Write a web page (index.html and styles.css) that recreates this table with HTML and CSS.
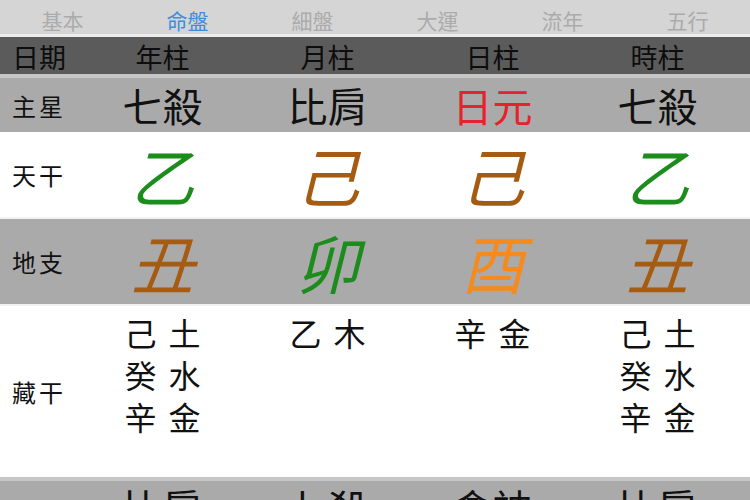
FILE: index.html
```html
<!DOCTYPE html>
<html lang="zh-Hant">
<head>
<meta charset="utf-8">
<link rel="stylesheet" href="styles.css">
</head>
<body>
<div class="page">
  <nav class="tabs">
    <span class="tab">基本</span>
    <span class="tab active">命盤</span>
    <span class="tab">細盤</span>
    <span class="tab">大運</span>
    <span class="tab">流年</span>
    <span class="tab">五行</span>
  </nav>
  <div class="sep sep-light"></div>
  <div class="row head">
    <span class="label">日期</span>
    <span class="cell">年柱</span>
    <span class="cell">月柱</span>
    <span class="cell">日柱</span>
    <span class="cell">時柱</span>
  </div>
  <div class="sep sep-mid"></div>
  <div class="row star gray">
    <span class="label">主星</span>
    <span class="cell">七殺</span>
    <span class="cell">比肩</span>
    <span class="cell red">日元</span>
    <span class="cell">七殺</span>
  </div>
  <div class="row gan white">
    <span class="label">天干</span>
    <span class="cell big green">乙</span>
    <span class="cell big brown">己</span>
    <span class="cell big brown">己</span>
    <span class="cell big green">乙</span>
  </div>
  <div class="sep sep-white"></div>
  <div class="row zhi gray">
    <span class="label">地支</span>
    <span class="cell big brown">丑</span>
    <span class="cell big green">卯</span>
    <span class="cell big orange">酉</span>
    <span class="cell big brown">丑</span>
  </div>
  <div class="sep sep-white"></div>
  <div class="row hidden white">
    <span class="label">藏干</span>
    <div class="cell stack">
      <span class="pair"><span>己</span><span>土</span></span>
      <span class="pair"><span>癸</span><span>水</span></span>
      <span class="pair"><span>辛</span><span>金</span></span>
    </div>
    <div class="cell stack">
      <span class="pair"><span>乙</span><span>木</span></span>
    </div>
    <div class="cell stack">
      <span class="pair"><span>辛</span><span>金</span></span>
    </div>
    <div class="cell stack">
      <span class="pair"><span>己</span><span>土</span></span>
      <span class="pair"><span>癸</span><span>水</span></span>
      <span class="pair"><span>辛</span><span>金</span></span>
    </div>
  </div>
  <div class="sep sep-mid"></div>
  <div class="row tail gray">
    <span class="label"></span>
    <span class="cell">比肩</span>
    <span class="cell">七殺</span>
    <span class="cell">食神</span>
    <span class="cell">比肩</span>
  </div>
</div>
</body>
</html>
```

FILE: styles.css
```css
html, body {
  margin: 0;
  padding: 0;
  background: #ffffff;
}
body {
  width: 750px;
  height: 500px;
  overflow: hidden;
  font-family: "Noto Sans CJK TC", "Noto Sans CJK SC", sans-serif;
  color: #111111;
}
.page {
  display: flex;
  flex-direction: column;
}
.tabs {
  display: grid;
  grid-template-columns: repeat(6, 125px);
  height: 34px;
  background: #d5d5d5;
}
.tab {
  text-align: center;
  font-size: 21px;
  line-height: 40px;
  height: 34px;
  color: #ababab;
}
.tab.active {
  color: #3f8ddc;
}
.sep { height: 3px; }
.sep-light { background: #ededed; }
.sep-mid { background: #c6c6c6; height: 4px; }
.sep-white { background: #f2f2f2; height: 2px; }
.row {
  display: grid;
  grid-template-columns: 80px repeat(4, 165px);
  align-items: center;
}
.label {
  padding-left: 12px;
  font-size: 24px;
  letter-spacing: 3px;
  white-space: nowrap;
}
.cell {
  text-align: center;
}
.gray { background: #aaaaaa; }
.white { background: #ffffff; }
.head {
  height: 37px;
  background: #5b5b5b;
}
.head .label,
.head .cell {
  font-size: 27px;
  letter-spacing: 0;
  color: #0d0d0d;
}
.star {
  height: 54px;
}
.star .cell {
  font-size: 40px;
  line-height: 54px;
}
.gan { height: 85px; }
.zhi { height: 85px; }
.big {
  font-size: 64px;
  line-height: 85px;
  font-weight: 400;
  font-style: italic;
}
.red { color: #e5232c; }
.green { color: #1c8c1c; }
.brown { color: #a65b12; }
.orange { color: #f58a1e; }
.hidden {
  height: 171px;
  align-items: stretch;
}
.hidden .label {
  align-self: center;
}
.stack {
  display: flex;
  flex-direction: column;
  align-items: center;
  padding-top: 5px;
}
.pair {
  display: flex;
  gap: 12px;
  font-size: 32px;
  line-height: 42px;
}
.tail {
  height: 40px;
  align-items: start;
}
.tail .cell {
  font-size: 40px;
  line-height: 40px;
  padding-top: 6px;
}
```
